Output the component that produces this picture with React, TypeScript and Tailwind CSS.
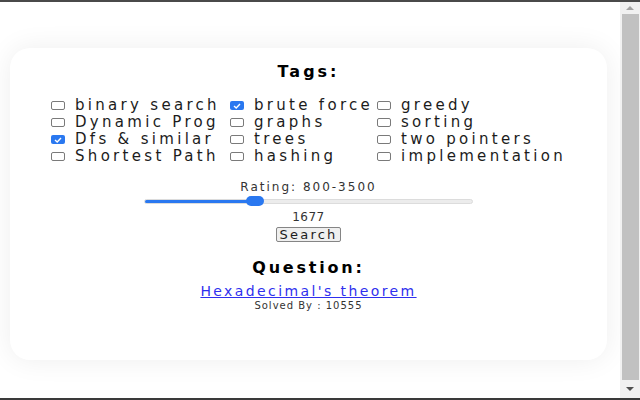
import React, { useState } from "react";

const TAGS: { label: string; checked: boolean }[] = [
  { label: "binary search", checked: false },
  { label: "brute force", checked: true },
  { label: "greedy", checked: false },
  { label: "Dynamic Prog", checked: false },
  { label: "graphs", checked: false },
  { label: "sorting", checked: false },
  { label: "Dfs & similar", checked: true },
  { label: "trees", checked: false },
  { label: "two pointers", checked: false },
  { label: "Shortest Path", checked: false },
  { label: "hashing", checked: false },
  { label: "implementation", checked: false },
];

const MIN = 800;
const MAX = 3500;

const Checkbox = ({ checked }: { checked: boolean }) =>
  checked ? (
    <span className="w-[14px] h-[9px] rounded-[2px] bg-[#2a78f0] flex items-center justify-center shrink-0">
      <svg width="8" height="6" viewBox="0 0 8 6">
        <path d="M1 3 L3.2 5 L7 1" fill="none" stroke="white" strokeWidth="1.4" />
      </svg>
    </span>
  ) : (
    <span className="w-[14px] h-[9px] rounded-[2px] border border-[#7a7a7a] bg-white shrink-0" />
  );

const Scrollbar = () => (
  <div className="w-[20px] bg-[#f1f1f1] flex flex-col items-center">
    <div className="h-[12px] flex items-center justify-center">
      <svg width="8" height="4" viewBox="0 0 8 4">
        <path d="M0 4 L4 0 L8 4 Z" fill="#a3a3a3" />
      </svg>
    </div>
    <div className="w-[17px] flex-1 bg-[#c1c1c1]" />
    <div className="h-[18px] flex items-center justify-center">
      <svg width="8" height="4" viewBox="0 0 8 4">
        <path d="M0 0 L8 0 L4 4 Z" fill="#505050" />
      </svg>
    </div>
  </div>
);

export default function App() {
  const [tags, setTags] = useState(TAGS);
  const rating = 1677;
  const pct = ((rating - MIN) / (MAX - MIN)) * 100;

  const toggle = (i: number) =>
    setTags((prev) =>
      prev.map((t, j) => (j === i ? { ...t, checked: !t.checked } : t)),
    );

  return (
    <div
      className="w-[640px] h-[400px] flex flex-col bg-white overflow-hidden text-[#1c1c1c]"
      style={{ fontFamily: '"DejaVu Sans", Verdana, sans-serif' }}
    >
      <div className="h-[2px] bg-[#4a4a4a]" />
      <div className="flex-1 flex">
        <div className="flex-1 pt-[46px] pl-[10px] pr-[13px]">
          <div className="h-[312px] bg-white rounded-[20px] shadow-[0_0_28px_rgba(0,0,0,0.07)] pt-[14px] flex flex-col">
            <h2 className="text-center text-[16px] leading-[20px] font-bold tracking-[3px] text-black">
              Tags:
            </h2>

            <div className="mt-[15px] ml-[41px] grid grid-cols-[179px_147px_193px]">
              {tags.map((t, i) => (
                <label
                  key={t.label}
                  onClick={() => toggle(i)}
                  className="h-[17px] flex items-center gap-[10px] cursor-pointer"
                >
                  <Checkbox checked={t.checked} />
                  <span className="text-[15px] leading-[17px] tracking-[3.3px] whitespace-nowrap">
                    {t.label}
                  </span>
                </label>
              ))}
            </div>

            <p className="mt-[14px] text-center text-[12px] leading-[16px] tracking-[2px] text-[#333]">
              Rating: 800-3500
            </p>

            <div className="mt-[1px] mx-auto w-[329px] h-[10px] relative flex items-center">
              <div className="w-full h-[5px] rounded-full bg-[#ececec] border border-[#dcdcdc] overflow-hidden">
                <div className="h-full bg-[#2a78f0]" style={{ width: `${pct}%` }} />
              </div>
              <div
                className="absolute top-0 w-[18px] h-[10px] rounded-full bg-[#2a78f0] -translate-x-1/2"
                style={{ left: `${pct + 1.2}%` }}
              />
            </div>

            <p className="mt-[4px] text-center text-[12px] leading-[14px] tracking-[0.5px] text-[#333]">
              {rating}
            </p>

            <div className="mt-[3px] flex justify-center">
              <button className="h-[15px] px-[3px] bg-[#efefef] border border-[#858585] rounded-[2px] text-[13px] leading-[13px] tracking-[2.2px] text-[#1c1c1c]">
                Search
              </button>
            </div>

            <h2 className="mt-[16px] text-center text-[16px] leading-[20px] font-bold tracking-[2.8px] text-black">
              Question:
            </h2>

            <div className="mt-[4px] text-center text-[14px] leading-[18px] tracking-[2.4px]">
              <a href="#" className="text-[#2f2fee] underline">
                Hexadecimal's theorem
              </a>
            </div>

            <p className="text-center text-[10px] leading-[12px] tracking-[1px] text-[#333]">
              Solved By : 10555
            </p>
          </div>
        </div>
        <Scrollbar />
      </div>
      <div className="h-[2px] bg-[#3a3a3a]" />
    </div>
  );
}
